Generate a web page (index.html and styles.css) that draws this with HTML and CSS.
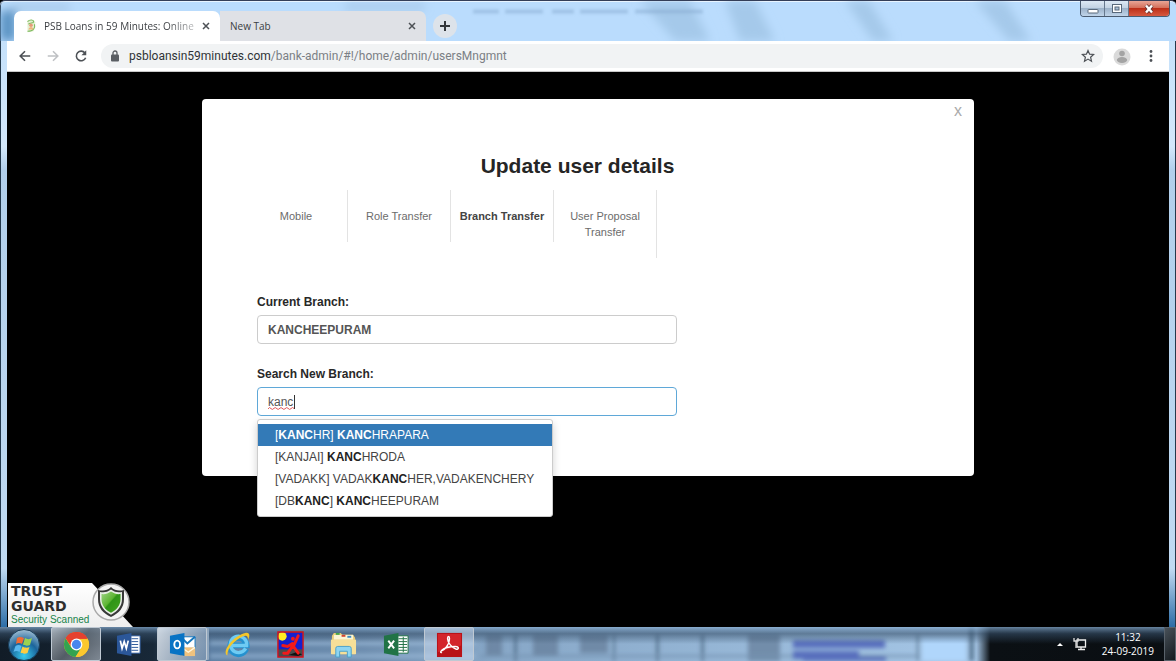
FILE: index.html
```html
<!DOCTYPE html>
<html lang="en">
<head>
<meta charset="utf-8">
<title>PSB Loans in 59 Minutes: Online</title>
<link rel="stylesheet" href="styles.css">
</head>
<body>
<div class="window">
  <header class="titlebar">
    <svg class="glass" viewBox="0 0 1176 42" preserveAspectRatio="none" aria-hidden="true">
      <defs><filter id="soft" x="-20%" y="-50%" width="140%" height="200%"><feGaussianBlur stdDeviation="5"/></filter><filter id="line" x="-5%" y="-200%" width="110%" height="500%"><feGaussianBlur stdDeviation="1.500"/></filter></defs>
      <g filter="url(#soft)">
        <path d="M0 10h16v32H0z" fill="#5b94c4"/>
        <path d="M10 5h60v4H10zM345 4h80v4h-80z" fill="#98b9d8"/>
        <path d="M640 0h50l20 42h-35zM725 0h30l20 42h-35zM845 0h24l24 42h-20zM975 0h30l26 42h-22z" fill="#a5c9ea"/>
      </g>
      <path d="M473 9h26v4h-26zM505 9h38v4h-38zM552 9h22v4h-22zM580 9h48v4h-48zM635 9h68v4h-68z" fill="#85a9cf" opacity=".5" filter="url(#line)"/>
    </svg>
    <nav class="tabs" aria-label="Browser tabs">
      <div class="tab tab-active">
        <svg class="favicon" viewBox="0 0 16 16" aria-hidden="true"><path d="M4 2l7-1 2 3-2 10-7 1z" fill="#e4efd0"/><path d="M4 3c3-3 7-2 7 0S6 4 5 6M12 6c1 4-1 8-8 8" fill="none" stroke="#7dbb60" stroke-width="1.300"/><circle cx="8" cy="7" r="2" fill="#e79a7a"/><path d="M5 12c1-4 5-4 6 0z" fill="#efb47c"/></svg>
        <span class="tab-title fade">PSB Loans in 59 Minutes: Online</span>
        <button class="tab-close" aria-label="Close tab"><svg viewBox="0 0 8 8"><path d="M1 1l6 6M7 1L1 7"/></svg></button>
      </div>
      <div class="tab">
        <span class="tab-title">New Tab</span>
        <button class="tab-close" aria-label="Close tab"><svg viewBox="0 0 8 8"><path d="M1 1l6 6M7 1L1 7"/></svg></button>
      </div>
      <button class="tab-add" aria-label="New tab"><svg viewBox="0 0 12 12"><path d="M6 1v10M1 6h10"/></svg></button>
    </nav>
    <div class="controls">
      <button class="control" aria-label="Minimize"><svg viewBox="0 0 12 12"><rect x="1" y="6.500" width="10" height="3.500" rx=".5" fill="#fff" stroke="#59697b"/></svg></button>
      <button class="control" aria-label="Restore"><svg viewBox="0 0 12 12"><rect x="1.500" y="1.500" width="9" height="8" fill="#fff" stroke="#59697b"/><rect x="4" y="4" width="4" height="3" fill="#a9bfd6" stroke="#59697b"/></svg></button>
      <button class="control control-close" aria-label="Close"><svg viewBox="0 0 12 12"><path d="M3 2.500l6 7M9 2.500l-6 7" stroke="#5d3030" stroke-width="4"/><path d="M3 2.500l6 7M9 2.500l-6 7" stroke="#fff" stroke-width="2.400"/></svg></button>
    </div>
  </header>

  <div class="frame">
    <div class="toolbar">
      <button class="tool" aria-label="Back"><svg viewBox="0 0 16 16"><path d="M14 8H3M8 2.500L2.500 8 8 13.500"/></svg></button>
      <button class="tool tool-off" aria-label="Forward"><svg viewBox="0 0 16 16"><path d="M2 8h11M8 2.500L13.500 8 8 13.500"/></svg></button>
      <button class="tool" aria-label="Reload"><svg viewBox="0 0 16 16"><path d="M12.500 4.500A5.500 5.500 0 1 0 13.300 10"/><path d="M14 1.500V7H8.500z" fill="#4d5156" stroke="none"/></svg></button>
      <div class="address">
        <svg class="lock" viewBox="0 0 10 12" aria-hidden="true"><rect x="1" y="4.500" width="8" height="7" rx="1" fill="#5a5e63"/><path d="M3 5V3a2 2 0 0 1 4 0v2" fill="none" stroke="#5a5e63" stroke-width="1.300"/></svg>
        <span class="url"><span class="host">psbloansin59minutes.com</span>/bank-admin/#!/home/admin/usersMngmnt</span>
        <button class="star" aria-label="Bookmark"><svg viewBox="0 0 14 14"><path d="M7 1.500l1.600 3.700 4 .3-3 2.700.9 4L7 10.100l-3.500 2.100.9-4-3-2.700 4-.3z"/></svg></button>
      </div>
      <button class="tool profile" aria-label="Profile"><svg viewBox="0 0 18 18"><circle cx="9" cy="9" r="8.500" fill="#dadada"/><circle cx="9" cy="5.500" r="2.800" fill="#a4a4a4"/><ellipse cx="9" cy="12" rx="5.200" ry="2.900" fill="#a4a4a4"/></svg></button>
      <button class="tool menu" aria-label="Menu"><svg viewBox="0 0 4 14"><circle cx="2" cy="2.500" r="1.400"/><circle cx="2" cy="7" r="1.400"/><circle cx="2" cy="11.500" r="1.400"/></svg></button>
    </div>

    <main class="page">
      <section class="modal" role="dialog" aria-labelledby="heading">
        <button class="modal-close" aria-label="Close dialog">x</button>
        <h1 class="heading" id="heading">Update user details</h1>
        <nav class="steps">
          <a class="step" href="#mobile">Mobile</a>
          <a class="step" href="#role">Role Transfer</a>
          <a class="step step-current" href="#branch">Branch Transfer</a>
          <a class="step" href="#proposal">User Proposal Transfer</a>
        </nav>
        <form class="form">
          <div class="field">
            <label class="label" for="current">Current Branch:</label>
            <input class="input input-bold" id="current" type="text" value="KANCHEEPURAM">
          </div>
          <div class="field">
            <label class="label" for="search">Search New Branch:</label>
            <input class="input input-focus" id="search" type="text" value="kanc" spellcheck="false" autocomplete="off">
            <svg class="squiggle" viewBox="0 0 27 3" aria-hidden="true"><path d="M0 2l1.500-1.500 3 2 3-2 3 2 3-2 3 2 3-2 3 2 3-2 1.500 1"/></svg>
            <span class="caret"></span>
            <ul class="options" role="listbox" aria-label="Branches">
              <li class="option option-on" role="option" aria-selected="true">[<b>KANC</b>HR] <b>KANC</b>HRAPARA</li>
              <li class="option" role="option">[KANJAI] <b>KANC</b>HRODA</li>
              <li class="option" role="option">[VADAKK] VADAK<b>KANC</b>HER,VADAKENCHERY</li>
              <li class="option" role="option">[DB<b>KANC</b>] <b>KANC</b>HEEPURAM</li>
            </ul>
          </div>
        </form>
      </section>

      <aside class="badge">
        <div class="badge-text">
          <strong>TRUST</strong>
          <strong>GUARD</strong>
          <span>Security Scanned</span>
        </div>
        <svg class="shield" viewBox="0 0 38 38" aria-hidden="true">
          <defs><linearGradient id="leaf" x1="0" y1="0" x2="1" y2="1"><stop offset="0" stop-color="#9fd387"/><stop offset=".45" stop-color="#5cb531"/><stop offset=".5" stop-color="#2f9417"/><stop offset="1" stop-color="#43a51f"/></linearGradient></defs>
          <circle cx="19" cy="19" r="18" fill="#f4f4f4" stroke="#a9a9a9" stroke-width="1.500"/>
          <path d="M19 4c4 4 8 4 13 3v9c0 9-5 14-13 18C11 30 6 25 6 16V7c5 1 9 1 13-3z" fill="#383838"/>
          <path d="M19 6.500c4 3 7 3 11 2.500v7c0 7-4 12-11 15.800C12 28 8 23 8 16V9c4 .5 7 .5 11-2.500z" fill="#e8eee5"/>
          <path d="M19 8.500c3 2 6 3 9.500 2.500v5c0 6-3.500 10.700-9.500 13.800C13 26.700 9.500 22 9.500 16v-5c3.500.5 6.500-.5 9.500-2.500z" fill="url(#leaf)"/>
        </svg>
      </aside>
    </main>
  </div>

  <footer class="taskbar">
    <svg class="glass" viewBox="0 0 1176 34" preserveAspectRatio="none" aria-hidden="true">
      <defs>
        <linearGradient id="bar" x1="0" x2="1" y1="0" y2="0"><stop offset="0" stop-color="#111c27"/><stop offset=".13" stop-color="#182838"/><stop offset=".18" stop-color="#5d7fa3"/><stop offset=".3" stop-color="#6c8cad"/><stop offset=".42" stop-color="#87a7c7"/><stop offset=".83" stop-color="#a5c6e6"/><stop offset=".842" stop-color="#0b1014"/><stop offset="1" stop-color="#0a0e12"/></linearGradient>
        <linearGradient id="top" x1="0" x2="0" y1="0" y2="1"><stop offset="0" stop-color="#86abcf" stop-opacity=".75"/><stop offset=".2" stop-color="#37506a" stop-opacity=".6"/><stop offset=".5" stop-color="#37506a" stop-opacity="0"/></linearGradient>
        <filter id="haze"><feGaussianBlur stdDeviation="2"/></filter>
      </defs>
      <path d="M0 0h1176v34H0z" fill="url(#bar)"/>
      <g filter="url(#haze)">
        <path d="M210 13h265v5H210zM210 27h265v4H210z" fill="#a4c2df" opacity=".6"/>
        <path d="M486 8h16v22h-16zM533 8h25v20h-25zM580 8h28v18h-28zM748 8h32v26h-32z" fill="#657f9b" opacity=".75"/>
        <path d="M514 8h3v26h-3zM613 8h2v26h-2zM656 8h3v26h-3zM701 8h3v26h-3zM917 8h2v26h-2zM969 0h5v34h-5z" fill="#4d6985" opacity=".8"/>
        <path d="M480 28h440v2H480z" fill="#7593b1"/>
        <path d="M793 13h92v8h-92zM793 24h66v8h-66zM803 30h83v4h-83z" fill="#586fbd"/>
        <path d="M922 10h44v24h-44z" fill="#b0d6fb"/>
      </g>
      <path d="M0 0h1176v34H0z" fill="url(#top)"/>
    </svg>
    <div class="apps">
      <button class="app start" aria-label="Start"><svg viewBox="0 0 34 34"><defs><radialGradient id="orb" cx=".5" cy=".85" r=".9"><stop offset="0" stop-color="#38cdf0"/><stop offset=".5" stop-color="#1b649b"/><stop offset="1" stop-color="#b4cbdb"/></radialGradient></defs><circle cx="17" cy="17" r="15.500" fill="url(#orb)" stroke="#163b57"/><path d="M10 10c2-1.500 4-1.500 7 0l-2 6c-2-1.500-4-1.500-6 0z" fill="#f16b35"/><path d="M18 10c2 1.500 5 1.500 7 0l-2 7c-2 1-5 1-7-.5z" fill="#9bd250"/><path d="M8.500 18c2-1.500 4-1.500 6 0l-2 6c-2-1.500-4-1.500-6 0z" fill="#5ab8ee"/><path d="M15.500 18.500c2 1.500 5 1.500 7 .5l-2 6c-2 1-5 1-7-.5z" fill="#fdcc42"/></svg></button>
      <button class="app app-lit" aria-label="Chrome"><svg viewBox="0 0 28 28"><circle cx="14" cy="14" r="13" fill="#fbc72e"/><path d="M14 14L2.740 7.500A13 13 0 0 1 25.260 7.500z" fill="#e5412f"/><path d="M2.740 7.500A13 13 0 0 0 13 26.960L19.500 16.500 14 14 8.500 17z" fill="#33a350"/><path d="M14 8h11.500A13 13 0 0 1 13 26.960L19.500 16.500z" fill="#fbc72e"/><path d="M2.740 7.500A13 13 0 0 1 25.500 8H14l-5.500 8z" fill="#e5412f"/><circle cx="14" cy="14" r="6.100" fill="#fff"/><circle cx="14" cy="14" r="4.800" fill="#4886ee"/></svg></button>
      <button class="app" aria-label="Word"><svg viewBox="0 0 28 28"><path d="M15 5h10v18H15z" fill="#fff" stroke="#2b579a"/><path d="M16 8h7M16 11h7M16 14h7M16 17h7M16 20h7" stroke="#2b579a"/><path d="M1 5l15-3v24L1 23z" fill="#2b579a"/><path d="M4.500 10l1.800 8 2.200-7 2.200 7 2-8" fill="none" stroke="#fff" stroke-width="1.800"/></svg></button>
      <button class="app app-lit app-stack" aria-label="Outlook"><svg viewBox="0 0 28 28"><path d="M14 6h13v12H14z" fill="#fff" stroke="#1877bd"/><path d="M15 9l4 4 8-7" fill="none" stroke="#1877bd" stroke-width="2"/><path d="M13 17h14v9H13z" fill="#f0c27e"/><path d="M13 17l7 5 7-5" fill="none" stroke="#fff6dd" stroke-width="1.500"/><path d="M1 5l15-3v24L1 23z" fill="#0873c4"/><ellipse cx="8.500" cy="14" rx="3" ry="4" fill="none" stroke="#fff" stroke-width="2"/></svg></button>
      <button class="app" aria-label="Internet Explorer"><svg viewBox="0 0 28 28"><path d="M23 18.500A8.500 8.500 0 1 1 23.500 15H9" fill="none" stroke="#2591cf" stroke-width="6"/><path d="M22.500 18A8.500 8.500 0 1 1 23.500 15H8" fill="none" stroke="#6fcbf3" stroke-width="3.500"/><path d="M3.500 25.500C-3 22 9 5 22 2c5-1 5 3 3 7 0-4-2-5-5-3.500C11 9.500 3 18 3.500 25.500z" fill="#f3c62b"/></svg></button>
      <button class="app" aria-label="Paint"><svg viewBox="0 0 28 28"><path d="M1 1h26v26H1z" fill="#1420cf"/><path d="M1.500 19h25v7.500h-25z" fill="#4a4a4a"/><path d="M12 25l8-3 6 2-4 2z" fill="#111"/><circle cx="5.500" cy="5.500" r="4.500" fill="#ffed22"/><path d="M22 5l-5 11M17 16l5 7M16 16l-5 7H7M6 15l5 1 5-3" fill="none" stroke="#f21a1a" stroke-width="3" stroke-linecap="round"/><circle cx="16.500" cy="8" r="2" fill="#f21a1a"/><path d="M1 1h26v26H1z" fill="none" stroke="#d41616" stroke-width="1.500"/></svg></button>
      <button class="app" aria-label="Explorer"><svg viewBox="0 0 28 28"><path d="M2 5l2-3h7l2 2h11l2 3v17H2z" fill="#e9cc77"/><path d="M4 4h20v5H4z" fill="#fbf5d4"/><path d="M6 3h4" stroke="#46a64b" stroke-width="2"/><path d="M12 5h4" stroke="#d34430" stroke-width="2"/><path d="M18 6h4" stroke="#3b8cc4" stroke-width="2"/><path d="M1 9h26v15H1z" fill="#f6df98"/><path d="M6 27v-9q0-2 2-2h12q2 0 2 2v9h-4v-6h-8v6z" fill="#8ed5f1" stroke="#4aa0ca"/></svg></button>
      <button class="app" aria-label="Excel"><svg viewBox="0 0 28 28"><path d="M15 5h11v18H15z" fill="#fff" stroke="#217346"/><path d="M16 8h9M16 11h9M16 14h9M16 17h9M16 20h9M21 6v16" stroke="#217346"/><path d="M1 5l15-3v24L1 23z" fill="#217346"/><path d="M5.500 10l6 8M11.500 10l-6 8" stroke="#fff" stroke-width="2"/></svg></button>
      <button class="app app-lit app-pale" aria-label="Adobe Reader"><svg viewBox="0 0 28 28"><path d="M1 2h26v25H1z" fill="#b81218"/><path d="M2 3h24v12L2 22z" fill="#d3242a"/><path d="M5 21c4-1 9-7 9-13 0-3-2-3-2 0 0 4 5 10 9 11 3 0 3-3-1-3-5 0-11 1-14 4-2 2-1 3 0 2" fill="none" stroke="#fff" stroke-width="1.500"/></svg></button>
    </div>
    <div class="tray">
      <button class="tray-button" aria-label="Show hidden icons"><svg class="arrow" viewBox="0 0 6 4"><path d="M0 4l3-3 3 3z" fill="#fff"/></svg></button>
      <button class="tray-button" aria-label="Network"><svg class="net" viewBox="0 0 14 14"><path d="M4 3h8.500v7H4zM5 12.500h7M8 10v2" fill="none" stroke="#eee" stroke-width="1.300"/><path d="M1 1v3h4V1M3 4v7" fill="none" stroke="#ddd" stroke-width="1.300"/></svg></button>
      <div class="clock"><time>11:32</time><time>24-09-2019</time></div>
      <button class="desktop" aria-label="Show desktop"></button>
    </div>
  </footer>
</div>
</body>
</html>
```
FILE: styles.css
```css
* { box-sizing: border-box; }
body { margin: 0; background: #000; font-family: "Liberation Sans", Arial, sans-serif; }
button { margin: 0; padding: 0; border: 0; background: none; font: inherit; color: inherit; }
svg { display: block; }

.window { display: flex; flex-direction: column; min-height: 100vh; }

.titlebar {
  position: relative;
  display: flex;
  justify-content: space-between;
  align-items: flex-start;
  height: 41px;
  padding: 0 6px 0 14px;
  background: #badcfd;
  border-top: 1px solid #343e58;
  border-radius: 5px 5px 0 0;
  box-shadow: inset 0 1px #e8f4ff, inset 1px 0 #34475c;
}
.glass { position: absolute; inset: 0; width: 100%; height: 100%; }
.tabs { position: relative; display: flex; align-items: center; padding-top: 10px; }
.tab {
  display: flex;
  align-items: center;
  gap: 6px;
  width: 206px;
  height: 30px;
  padding: 0 10px;
  background: #dfe1e6;
  border-radius: 0 7px 0 0;
  color: #3c3f43;
  font: 10px/16px "Open Sans", "Noto Sans", sans-serif;
}
.tab-active { background: #fff; border-radius: 7px 7px 0 0; }
.favicon { flex: none; width: 14px; height: 14px; }
.tab-title { flex: 1; overflow: hidden; white-space: nowrap; }
.fade { -webkit-mask-image: linear-gradient(90deg, #000 80%, rgba(0, 0, 0, .3)); mask-image: linear-gradient(90deg, #000 80%, rgba(0, 0, 0, .3)); }
.tab-close svg { width: 8px; height: 8px; stroke: #4d5156; stroke-width: 1.5; }
.tab-add { display: grid; place-items: center; width: 24px; height: 24px; margin-left: 7px; border-radius: 50%; background: #dde3ea; }
.tab-add svg { width: 12px; height: 12px; stroke: #33373b; stroke-width: 2; }

.controls { position: relative; display: flex; height: 16px; border: 1px solid #4a5b70; border-top: 0; border-radius: 0 0 4px 4px; overflow: hidden; }
.control { display: grid; place-items: center; width: 24px; background: linear-gradient(#dce8f4, #c3d3e4 45%, #9db3ca 50%, #c0d4e9); border-right: 1px solid #66788d; }
.control svg { width: 12px; height: 12px; }
.control-close { width: 40px; border: 0; background: linear-gradient(#e8a596, #d4705b 45%, #bd2f19 50%, #d65940); }

.frame {
  flex: 1;
  display: flex;
  flex-direction: column;
  padding: 0 6px;
  background: linear-gradient(#c5e1fb, #d3e8fb 18%, #b1cfeb 22%, #c0daf2 90%, #2c6da6);
  border: solid #24394c;
  border-width: 0 1px;
}
.toolbar { display: flex; align-items: center; height: 31px; padding: 0 12px 0 10px; background: #fff; border-bottom: 1px solid #c8c8c8; }
.tool { display: grid; place-items: center; width: 16px; height: 16px; margin-right: 12px; }
.tool svg { width: 14px; height: 14px; fill: none; stroke: #4d5156; stroke-width: 1.8; }
.tool-off svg { stroke: #bfc1c4; }
.address { flex: 1; display: flex; align-items: center; height: 24px; padding: 0 8px 0 9px; background: #f1f3f4; border-radius: 12px; }
.lock { width: 10px; height: 12px; margin-right: 9px; }
.url { flex: 1; color: #7b7f84; font: 12px/16px Roboto, "Open Sans", sans-serif; white-space: nowrap; }
.host { color: #303337; }
.star svg { width: 14px; height: 14px; fill: none; stroke: #4d5156; stroke-width: 1.2; }
.profile { width: 18px; margin: 0 14px 0 10px; }
.profile svg { width: 18px; height: 18px; stroke: none; }
.menu { width: 12px; margin: 0; }
.menu svg { width: 4px; height: 14px; fill: #4d5156; stroke: none; }

.page { position: relative; flex: 1; padding: 27px 16px 0; background: #000; }
.modal { position: relative; max-width: 772px; margin: 0 auto; padding: 53px 56px 60px 55px; background: #fff; border-radius: 4px; }
.modal-close { position: absolute; top: 4px; right: 12px; color: #aaa; font-size: 16px; line-height: 16px; }
.heading { margin: 0; padding-right: 20px; color: #252525; font-size: 21px; line-height: 28px; text-align: center; }
.steps { display: flex; align-items: flex-start; margin: 10px 0 0 -12px; }
.step { width: 103px; padding: 18px 8px; border-right: 1px solid #e3e3e3; color: #6c6c6c; font-size: 11px; line-height: 16px; text-align: center; text-decoration: none; }
.step-current { padding: 18px 0; color: #444; font-weight: bold; }
.form { display: flex; flex-direction: column; gap: 22px; max-width: 420px; margin-top: 36px; }
.field { position: relative; display: flex; flex-direction: column; gap: 5px; }
.label { color: #282828; font-size: 12px; font-weight: bold; line-height: 16px; }
.input { width: 100%; height: 29px; padding: 0 10px; border: 1px solid #ccc; border-radius: 4px; outline: 0; background: #fff; color: #555; font: 12px/16px "Liberation Sans", Arial, sans-serif; }
.input-bold { font-weight: bold; }
.input-focus { border-color: #5fa8d8; caret-color: transparent; }
.squiggle { position: absolute; left: 11px; bottom: 6px; width: 26px; height: 3px; fill: none; stroke: #e05050; stroke-width: 1; }
.caret { position: absolute; left: 37px; bottom: 7px; width: 1px; height: 14px; background: #333; }
.options { position: absolute; top: 100%; left: 0; width: 296px; margin: 3px 0 0; padding: 4px 0; list-style: none; background: #fff; border: 1px solid #ccc; border-radius: 3px; box-shadow: 0 4px 9px rgba(0, 0, 0, .18); }
.option { padding: 3px 17px; color: #444; font-size: 12px; line-height: 16px; white-space: nowrap; }
.option b { color: #222; }
.option-on, .option-on b { background: #337ab7; color: #fff; }

.badge { position: absolute; left: 1px; bottom: 0; display: flex; align-items: flex-start; width: 125px; height: 44px; }
.badge::before { content: ""; position: absolute; inset: 0; background: linear-gradient(#fff, #eee); clip-path: polygon(0 0, 84px 0, 125px 44px, 0 44px); }
.badge-text { position: relative; display: flex; flex-direction: column; width: 84px; padding: 1px 0 0 3px; white-space: nowrap; }
.badge strong { color: #2e2e2e; font: bold 14px/15px "DejaVu Sans", sans-serif; }
.badge span { color: #16834a; font-size: 10px; line-height: 12px; }
.shield { position: relative; width: 38px; height: 38px; }

.taskbar { position: relative; display: flex; justify-content: space-between; height: 34px; background: #10161d; }
.apps { position: relative; display: flex; padding-left: 6px; gap: 3px; }
.app { display: grid; place-items: center; width: 50px; height: 34px; border: 1px solid transparent; border-radius: 2px; }
.app svg { width: 27px; height: 27px; }
.start { width: 34px; margin-right: 8px; }
.start svg { width: 34px; height: 34px; }
.app-lit { border-color: #bfc9d3; background: linear-gradient(135deg, rgba(200, 206, 212, .75), rgba(110, 118, 126, .7) 50%, rgba(170, 178, 188, .7)); }
.app-stack { margin-right: 2px; background: linear-gradient(110deg, rgba(220, 228, 237, .9), rgba(130, 155, 182, .7)); box-shadow: 3px 0 0 -1px #8fa6bd; }
.app-pale { background: rgba(200, 217, 236, .55); }
.tray { position: relative; display: flex; align-items: center; color: #fff; font: 10px/14px "Open Sans", "Noto Sans", sans-serif; }
.tray-button { display: grid; place-items: center; width: 20px; height: 20px; }
.arrow { width: 6px; height: 4px; }
.net { width: 14px; height: 14px; }
.clock { display: flex; flex-direction: column; align-items: center; margin: 0 10px 0 12px; }
.desktop { width: 12px; height: 34px; border: 1px solid #59626b; background: linear-gradient(135deg, #485159, #14191e); }
```
